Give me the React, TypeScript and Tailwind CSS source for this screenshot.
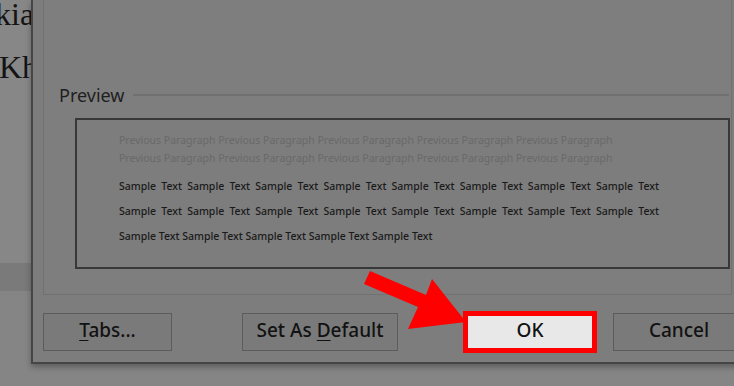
const prev = Array(5).fill("Previous Paragraph").join(" ");
const sample = (n: number) => Array(n).fill("Sample Text").join(" ");

function DlgButton({ children, className = "" }: { children: React.ReactNode; className?: string }) {
  return (
    <div
      className={`h-[38px] pb-[3px] flex items-center justify-center border border-[#5c5c5c] bg-[#7a7a7a] text-[19px] font-medium text-[#121212] ${className}`}
    >
      {children}
    </div>
  );
}

export default function App() {
  return (
    <div className="relative w-[734px] h-[386px] overflow-hidden bg-[#858585] font-['Noto_Sans',sans-serif]">
      {/* document behind the dialog */}
      <div className="flex flex-col w-[31px] h-full overflow-hidden">
        <div className="h-[263px] bg-[#878787] font-['Liberation_Serif',serif] text-[32px] leading-none text-[#141414] whitespace-nowrap">
          <div className="mt-[-2px] ml-[-5px]">kia</div>
          <div className="mt-[21px] ml-[-1px]">Kh</div>
        </div>
        <div className="h-[28px] bg-[#7a7a7a]" />
        <div className="flex-1 bg-[#858585]" />
      </div>

      {/* paragraph dialog window */}
      <div className="absolute left-[31px] top-0 w-[740px] h-[364px] bg-[#7d7d7d] border-l-2 border-b-2 border-[#454545] shadow-[0_3px_6px_rgba(0,0,0,0.3)] flex flex-col pl-[10px]">
        <div className="w-[689px] border-l border-r border-b border-[#717171] pt-[83px] pb-[25px] bg-[#7e7e7e]">
          <div className="flex items-center pl-[15px] pr-[2px]">
            <span className="text-[18px] leading-[24px] text-[#1f1f1f]">Preview</span>
            <div className="flex-1 ml-[9px] h-[2px] bg-[#707070]" />
          </div>
          <div className="mt-[11px] ml-[31px] mr-[1px] h-[151px] border-2 border-[#383838] bg-[#7d7d7d] pt-[11px] pl-[42px]">
            <div className="text-[10.5px] leading-[18px] text-[#696969] whitespace-nowrap">
              <div>{prev}</div>
              <div>{prev}</div>
            </div>
            <div className="mt-[7px] w-[540px] text-[10.5px] leading-[25px] font-medium text-[#1a1a1a] whitespace-nowrap">
              <div className="text-justify [text-align-last:justify] whitespace-normal">{sample(8)}</div>
              <div className="text-justify [text-align-last:justify] whitespace-normal">{sample(8)}</div>
              <div>{sample(5)}</div>
            </div>
          </div>
        </div>

        <div className="flex items-center mt-[16px]">
          <DlgButton className="w-[129px]">
            <span>
              <u className="underline-offset-[3px]">T</u>abs...
            </span>
          </DlgButton>
          <DlgButton className="w-[156px] ml-[70px]">
            <span>
              Set As <u className="underline-offset-[3px]">D</u>efault
            </span>
          </DlgButton>
          <div className="ml-[65px] w-[134px] h-[42px] pb-[3px] border-[5px] border-[#ff0000] bg-[#e8e8e8] flex items-center justify-center text-[19px] font-medium text-[#111111]">
            OK
          </div>
          <DlgButton className="w-[132px] ml-[16px]">Cancel</DlgButton>
        </div>
      </div>

      {/* red arrow annotation */}
      <svg className="absolute left-0 top-0 pointer-events-none" width="734" height="386" viewBox="0 0 734 386">
        <polygon
          points="370,271 426,295 432,279 466,322 408,329 418,307 364,284"
          fill="#ff0000"
        />
      </svg>
    </div>
  );
}
